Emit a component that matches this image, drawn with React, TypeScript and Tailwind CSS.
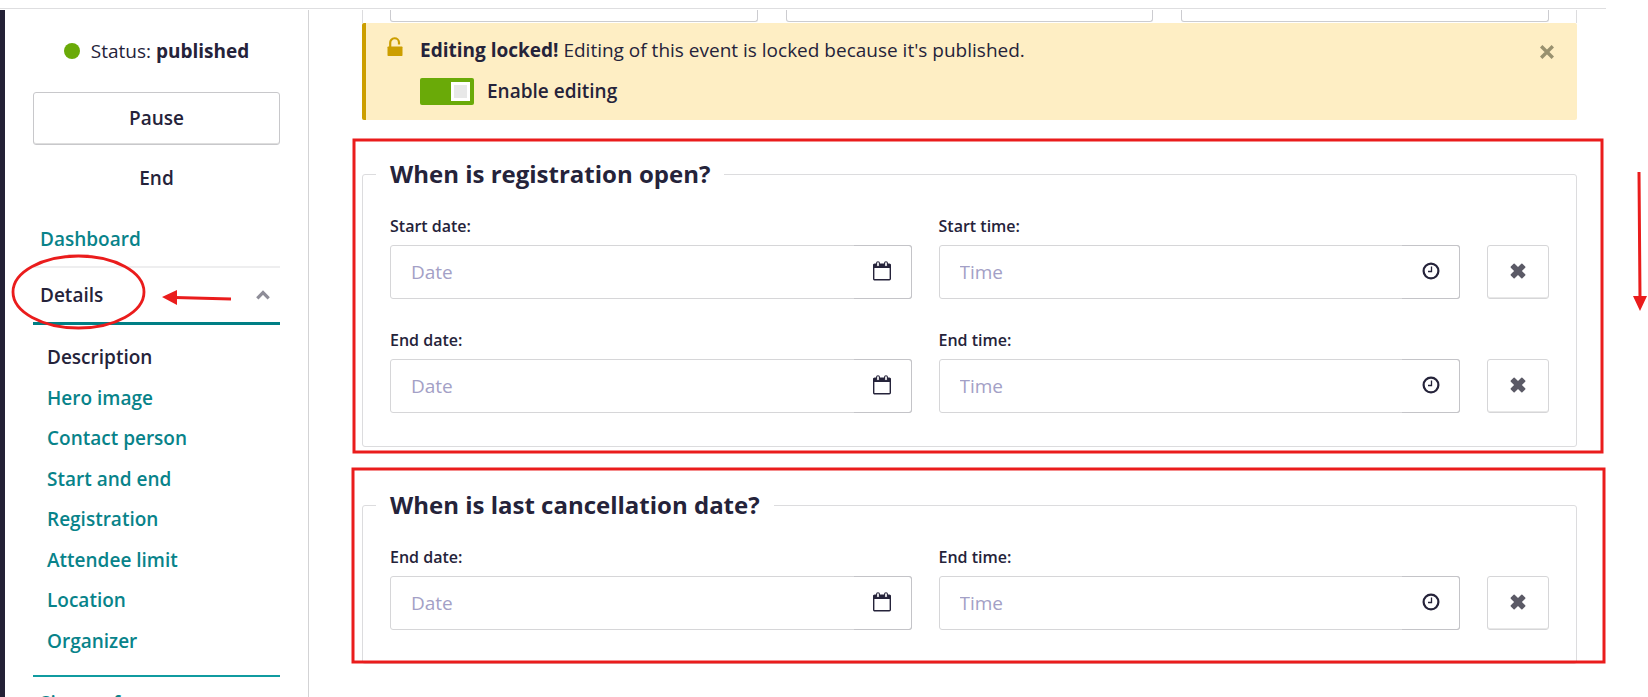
import { useState } from "react";
import type { ReactNode } from "react";

const SUB_ITEMS = [
  "Description",
  "Hero image",
  "Contact person",
  "Start and end",
  "Registration",
  "Attendee limit",
  "Location",
  "Organizer",
];

function CrossIcon({ className }: { className: string }) {
  return (
    <svg viewBox="0 0 16 16" className={className} fill="currentColor" aria-hidden="true">
      <path d="M.8 3.6 3.6.8Q4.1.3 4.7.8L8 4.1 11.3.8q.6-.5 1.1 0l2.8 2.8q.5.5 0 1.1L11.9 8l3.3 3.3q.5.6 0 1.1l-2.8 2.8q-.5.5-1.1 0L8 11.9l-3.3 3.3q-.6.5-1.1 0L.8 12.400q-.5-.5 0-1.1L4.100 8 .8 4.700q-.5-.6 0-1.1Z" />
    </svg>
  );
}

function ThinCrossIcon({ className }: { className: string }) {
  return (
    <svg viewBox="0 0 14 14" className={className} fill="none" stroke="currentColor" strokeWidth="3.4" aria-hidden="true">
      <path d="M1.2 1.2 12.8 12.8M12.8 1.2 1.2 12.8" />
    </svg>
  );
}

function CalendarIcon() {
  return (
    <svg viewBox="0 0 18 20" className="h-5 w-[18px]" aria-hidden="true">
      <rect x=".7" y="3.2" width="16.6" height="15.6" rx="1" fill="none" stroke="currentColor" strokeWidth="1.4" />
      <path d="M.5 3h17v4H.5Z" fill="currentColor" />
      <rect x="3.6" y=".7" width="2.8" height="5" rx="1.4" fill="#fff" stroke="currentColor" strokeWidth="1.1" />
      <rect x="11.6" y=".7" width="2.8" height="5" rx="1.4" fill="#fff" stroke="currentColor" strokeWidth="1.1" />
    </svg>
  );
}

function ClockIcon() {
  return (
    <svg viewBox="0 0 18 18" className="h-[18px] w-[18px]" fill="none" stroke="currentColor" aria-hidden="true">
      <circle cx="9" cy="9" r="7.4" strokeWidth="2.2" />
      <path d="M9.5 4.5v5H6" strokeWidth="1.3" />
    </svg>
  );
}

function PickerField(props: { id: string; label: string; kind: "Date" | "Time" }) {
  return (
    <div className="min-w-0 flex-1">
      <label htmlFor={props.id} className="block text-base leading-6 font-semibold">
        {props.label}
      </label>
      <div className="mt-[7px] flex h-[54px] rounded-[3px] border border-[#d6d6d8]">
        <input
          id={props.id}
          placeholder={props.kind}
          className="min-w-0 flex-1 pl-5 text-[19px] outline-none placeholder:text-[#a3a0c6]"
        />
        <button
          type="button"
          aria-label={`Choose ${props.kind.toLowerCase()}`}
          className="-my-px -mr-px flex w-[58px] items-center justify-center rounded-r-[3px] border-y border-r border-[#c4c4c8] pb-0.5"
        >
          {props.kind === "Date" ? <CalendarIcon /> : <ClockIcon />}
        </button>
      </div>
    </div>
  );
}

function PickerRow({ id, label }: { id: string; label: string }) {
  return (
    <div className="flex items-end gap-[27px]">
      <PickerField id={`${id}-date`} label={`${label} date:`} kind="Date" />
      <PickerField id={`${id}-time`} label={`${label} time:`} kind="Time" />
      <button
        type="button"
        aria-label={`Clear ${label.toLowerCase()}`}
        className="flex h-[54px] w-[62px] items-center justify-center rounded-[3px] border border-[#d6d6d8] pb-0.5 text-[#5b5a66] shadow-[inset_0_-1px_0_#e8e8e8]"
      >
        <CrossIcon className="h-4 w-4" />
      </button>
    </div>
  );
}

function Section({ title, children }: { title: string; children: ReactNode }) {
  return (
    <fieldset className="min-w-0 rounded-[3px] border border-[#dcdcde] px-[27px] pb-[33px]">
      <legend className="-ml-3.5 px-3.5 text-2xl leading-8 font-bold">{title}</legend>
      <div className="flex flex-col gap-[29px] pt-6">{children}</div>
    </fieldset>
  );
}

function Sidebar() {
  return (
    <aside className="w-[304px] shrink-0 border-r border-[#d3d3d5] pt-[25px] pr-7 pl-7 text-[19px]">
      <div className="flex h-8 items-center justify-center gap-[11px]">
        <span className="h-4 w-4 rounded-full bg-[#6aaa08]" />
        <span>
          Status: <strong className="font-bold">published</strong>
        </span>
      </div>
      <button
        type="button"
        className="mt-[25px] h-[53px] w-full rounded-[3px] border border-[#c8c8cb] font-semibold shadow-[inset_0_-1px_0_#dedede]"
      >
        Pause
      </button>
      <button type="button" className="mt-[7px] h-[53px] w-full font-semibold">
        End
      </button>
      <nav className="mt-[7px] font-semibold text-[#08838a]">
        <a href="#dashboard" className="flex h-[56px] items-center border-b-2 border-[#eeeeef] px-[7px]">
          Dashboard
        </a>
        <a
          href="#details"
          className="flex h-[57px] items-center justify-between border-b-[3px] border-[#007f85] pr-2.5 pl-[7px] text-[#25233a]"
        >
          Details
          <svg viewBox="0 0 14 10" className="h-2.5 w-3.5" fill="none" stroke="#8e8d98" strokeWidth="3.2" aria-hidden="true">
            <path d="M1.3 8.3 7 2.6l5.7 5.7" />
          </svg>
        </a>
        <ul className="mt-3 grid h-[324px] grid-rows-8 pl-3.5">
          {SUB_ITEMS.map((item, i) => (
            <li key={item} className="flex items-center">
              <a href="#details" className={i === 0 ? "text-[#25233a]" : ""}>
                {item}
              </a>
            </li>
          ))}
        </ul>
        <a href="#signup" className="mt-3.5 flex h-[54px] items-center border-t-2 border-[#109ba0] px-[7px]">
          Sign-up form
        </a>
      </nav>
    </aside>
  );
}

function EditingAlert() {
  const [enabled, setEnabled] = useState(true);

  return (
    <div className="flex h-[97px] rounded-[2px] border-l-4 border-[#cc9e00] bg-[#feeec4] pt-3.5 pr-[23px] pl-[21px]">
      <svg viewBox="0 0 16 20" className="h-5 w-4" fill="#cc9e00" aria-hidden="true">
        <rect x=".5" y="9.5" width="15" height="9.5" rx=".7" />
        <path d="M3.2 11V5.8a4.3 4.3 0 0 1 8.8-.3V7.500" fill="none" stroke="#cc9e00" strokeWidth="2.2" />
      </svg>
      <div className="ml-[17px] flex-1 text-[19px]">
        <p className="leading-[27px]">
          <strong className="font-bold">Editing locked!</strong> Editing of this event is locked because it's published.
        </p>
        <label className="mt-3.5 flex h-[27px] items-center gap-[13px] font-semibold">
          <input
            type="checkbox"
            role="switch"
            checked={enabled}
            onChange={(e) => setEnabled(e.target.checked)}
            className="flex h-[27px] w-[54px] appearance-none items-center rounded-[2px] bg-gray-400 p-1 before:h-[19px] before:w-[19px] before:border-[3px] before:border-white before:bg-[#e8e8e8] checked:justify-end checked:bg-[#6aaa08]"
          />
          Enable editing
        </label>
      </div>
      <button type="button" aria-label="Dismiss" className="mt-2 h-3.5 w-3.5 text-[#99916f]">
        <ThinCrossIcon className="h-3.5 w-3.5" />
      </button>
    </div>
  );
}

// Hand-drawn style marks that float over the form
function Markup() {
  return (
    <svg className="pointer-events-none absolute top-0 left-0 h-[697px] w-[1648px]" fill="none" stroke="#ea1c1c" strokeWidth="3" aria-hidden="true">
      <rect x="354" y="140" width="1248" height="312" />
      <rect x="353" y="469" width="1251" height="193" />
      <ellipse cx="78.5" cy="292" rx="65.5" ry="36" strokeWidth="2.8" />
      <path d="M231 299 175 297.5M1639 172 1640 298" />
      <path d="M162 297 177 290V305ZM1633 296H1647L1640 311Z" fill="#ea1c1c" stroke="none" />
    </svg>
  );
}

export default function App() {
  return (
    <div className="relative h-screen overflow-hidden bg-white font-['Open_Sans','Noto_Sans',sans-serif] text-[#25233a]">
      <header className="mr-[42px] h-[9px] border-b border-[#dedee0]" />
      <div className="mt-px flex">
        <div className="w-[5px] shrink-0 bg-[#232136]" />
        <Sidebar />
        <main className="min-w-0 flex-1 pr-[71px] pl-[53px]">
          <div className="flex h-[13px] gap-7 border-x border-[#dcdcde] px-[27px]">
            <div className="h-3 flex-1 rounded-b-[3px] border border-t-0 border-[#ccccd0]" />
            <div className="h-3 flex-1 rounded-b-[3px] border border-t-0 border-[#ccccd0]" />
            <div className="h-3 flex-1 rounded-b-[3px] border border-t-0 border-[#ccccd0]" />
          </div>
          <EditingAlert />
          <div className="mt-[38px] flex flex-col gap-[42px]">
            <Section title="When is registration open?">
              <PickerRow id="open-start" label="Start" />
              <PickerRow id="open-end" label="End" />
            </Section>
            <Section title="When is last cancellation date?">
              <PickerRow id="cancel-end" label="End" />
            </Section>
          </div>
        </main>
      </div>
      <Markup />
    </div>
  );
}
